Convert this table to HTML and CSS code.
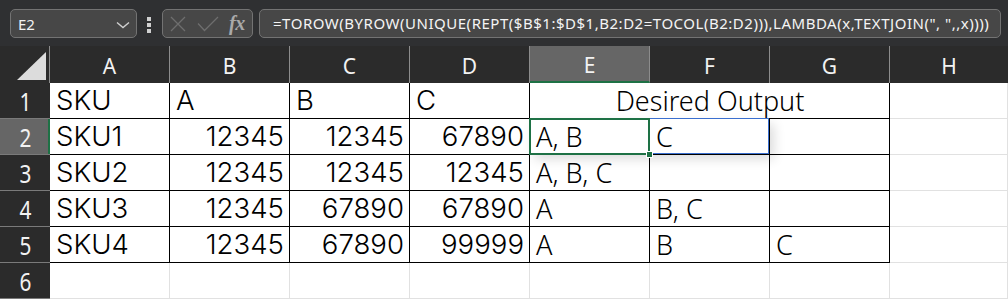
FILE: index.html
```html
<!DOCTYPE html>
<html>
<head>
<meta charset="utf-8">
<link rel="stylesheet" href="styles.css">
</head>
<body>
<div class="topbar">
  <div class="namebox">
    <span class="name">E2</span>
    <svg class="chev" width="14" height="8" viewBox="0 0 14 8"><path d="M1 1.5 L7 6.5 L13 1.5" fill="none" stroke="#d0d0d0" stroke-width="1.4"/></svg>
  </div>
  <div class="dots"><i></i><i></i><i></i></div>
  <div class="fxbox">
    <svg width="16" height="16" viewBox="0 0 16 16" class="ico"><path d="M1 1 L15 15 M15 1 L1 15" stroke="#6e6e6e" stroke-width="1.3" fill="none"/></svg>
    <svg width="22" height="16" viewBox="0 0 22 16" class="ico chk"><path d="M1 7.5 L7.5 14.5 L21 1" stroke="#6e6e6e" stroke-width="1.3" fill="none"/></svg>
    <span class="fx">fx</span>
  </div>
  <div class="formula">=TOROW(BYROW(UNIQUE(REPT($B$1:$D$1,B2:D2=TOCOL(B2:D2))),LAMBDA(x,TEXTJOIN(", ",,x))))</div>
</div>
<div class="sheet">
  <div class="corner"><span class="tri"></span></div>
  <div class="ch">A</div><div class="ch">B</div><div class="ch">C</div><div class="ch">D</div><div class="ch sel">E</div><div class="ch">F</div><div class="ch">G</div><div class="ch last">H</div>

  <div class="rh"><span>1</span></div>
  <div class="c d">SKU</div><div class="c d">A</div><div class="c d">B</div><div class="c d">C</div>
  <div class="c d out merged">Desired Output</div>
  <div class="c"></div>

  <div class="rh sel"><span>2</span></div>
  <div class="c d">SKU1</div><div class="c d num">12345</div><div class="c d num">12345</div><div class="c d num">67890</div>
  <div class="c d out active">A, B<span class="handle"></span></div><div class="c d out spill">C</div><div class="c d out"></div>
  <div class="c"></div>

  <div class="rh"><span>3</span></div>
  <div class="c d">SKU2</div><div class="c d num">12345</div><div class="c d num">12345</div><div class="c d num">12345</div>
  <div class="c d out">A, B, C</div><div class="c d out"></div><div class="c d out"></div>
  <div class="c"></div>

  <div class="rh"><span>4</span></div>
  <div class="c d">SKU3</div><div class="c d num">12345</div><div class="c d num">67890</div><div class="c d num">67890</div>
  <div class="c d out">A</div><div class="c d out">B, C</div><div class="c d out"></div>
  <div class="c"></div>

  <div class="rh"><span>5</span></div>
  <div class="c d">SKU4</div><div class="c d num">12345</div><div class="c d num">67890</div><div class="c d num">99999</div>
  <div class="c d out">A</div><div class="c d out">B</div><div class="c d out">C</div>
  <div class="c"></div>

  <div class="rh"><span>6</span></div>
  <div class="c"></div><div class="c"></div><div class="c"></div><div class="c"></div><div class="c"></div><div class="c"></div><div class="c"></div><div class="c"></div>
</div>
</body>
</html>
```
FILE: styles.css
```css
* { box-sizing: border-box; }
html, body { margin: 0; padding: 0; }
body {
  width: 1008px;
  height: 300px;
  overflow: hidden;
  background: #ffffff;
  font-family: "Noto Sans", sans-serif;
}
.topbar {
  height: 46px;
  background: #2f3032;
  display: flex;
  align-items: flex-start;
  padding: 9px 0 0 10px;
}
.namebox {
  width: 127px;
  height: 29px;
  background: #474747;
  border: 1px solid #737373;
  border-radius: 5px;
  display: flex;
  align-items: center;
  justify-content: space-between;
  padding: 0 6px 0 7px;
}
.name {
  color: #f2f2f2;
  font-size: 15px;
}
.chev { margin-top: 2px; }
.dots {
  width: 4px;
  margin: 8px 0 0 10px;
  display: flex;
  flex-direction: column;
  gap: 2px;
}
.dots i {
  display: block;
  width: 4px;
  height: 4px;
  background: #d0d0d0;
}
.fxbox {
  width: 91px;
  height: 29px;
  margin-left: 11px;
  background: #474747;
  border: 1px solid #737373;
  border-radius: 5px;
  display: flex;
  align-items: center;
  padding: 0 0 0 7px;
}
.ico { display: block; }
.chk { margin-left: 11px; }
.fx {
  margin-left: 10px;
  font-family: "Liberation Serif", serif;
  font-style: italic;
  font-weight: bold;
  font-size: 20px;
  color: #a9a9a9;
  letter-spacing: -0.5px;
}
.formula {
  width: 742px;
  height: 29px;
  margin-left: 6px;
  background: #474747;
  border: 1px solid #737373;
  border-radius: 5px;
  color: #f4f4f4;
  font-size: 15px;
  letter-spacing: 0.52px;
  line-height: 27px;
  padding-left: 13px;
  white-space: nowrap;
  overflow: hidden;
}
.sheet {
  display: grid;
  grid-template-columns: 50px repeat(7, 120px) 118px;
  grid-template-rows: 37px repeat(6, 36px);
}
.corner {
  background: #2b2b2b;
  border-right: 1px solid #8c8c8c;
  display: flex;
  align-items: flex-end;
  justify-content: flex-end;
  padding: 0 3px 3px 0;
}
.tri {
  width: 29px;
  height: 28px;
  background: #dcdcdc;
  clip-path: polygon(100% 0, 100% 100%, 0 100%);
}
.ch {
  background: #2b2b2b;
  border-right: 1px solid #8c8c8c;
  color: #f2f2f2;
  font-size: 21px;
  text-align: center;
  line-height: 40px;
}
.ch.last { border-right: none; }
.ch.sel {
  background: #666666;
  border-bottom: 2px solid #1e7145;
  line-height: 38px;
}
.rh {
  background: #2b2b2b;
  border-bottom: 1px solid #7a7a7a;
  color: #f2f2f2;
  font-size: 26px;
  text-align: center;
  line-height: 36px;
}
.rh span {
  display: inline-block;
  transform: scaleX(0.8);
}
.rh.sel {
  background: #666666;
  box-shadow: inset -2px 0 0 #1e7145;
}
.c {
  border-right: 1px solid #e1e1e1;
  border-bottom: 1px solid #e1e1e1;
  font-family: "Inter", sans-serif;
  font-weight: 300;
  font-size: 27.6px;
  line-height: 35px;
  color: #000;
  padding: 0 5px 0 6px;
  white-space: nowrap;
  position: relative;
}
.c.d {
  border-right-color: #000;
  border-bottom-color: #000;
}
.c.num { text-align: right; }
.c.out {
  font-family: "Noto Sans", sans-serif;
  font-weight: 300;
  font-size: 27px;
}
.merged {
  grid-column: span 3;
  text-align: center;
}
.active::after {
  content: "";
  position: absolute;
  top: -1px;
  left: -1px;
  right: -1px;
  bottom: -1px;
  border: 2px solid #1e7145;
  z-index: 4;
}
.active::before {
  content: "";
  position: absolute;
  top: 0;
  left: 0;
  width: 240px;
  height: 100%;
  box-shadow: 4px 5px 12px rgba(0, 0, 0, 0.14);
  z-index: 2;
}
.handle {
  position: absolute;
  right: -4px;
  bottom: -4px;
  width: 7px;
  height: 7px;
  background: #1e7145;
  border: 1px solid #ffffff;
  z-index: 5;
}
.spill::after {
  content: "";
  position: absolute;
  top: -1px;
  left: -1px;
  right: 0;
  bottom: 0;
  border: 1px solid #3a6fcf;
  z-index: 3;
}
```
